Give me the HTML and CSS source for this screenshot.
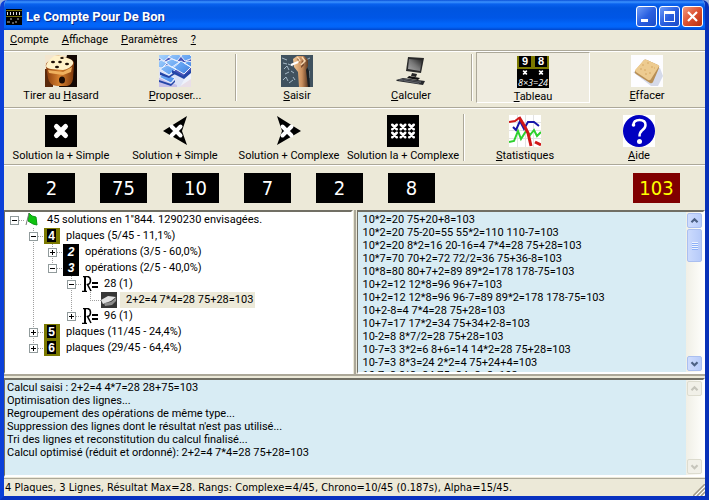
FILE: index.html
```html
<!DOCTYPE html>
<html lang="fr">
<head>
<meta charset="utf-8">
<title>Le Compte Pour De Bon</title>
<link rel="stylesheet" href="styles.css">
</head>
<body>
<svg width="0" height="0" class="defs" aria-hidden="true">
  <defs>
    <path id="cross" d="M-4.500-4.500L4.500 4.500M4.500-4.500L-4.500 4.500" fill="none" stroke="#fff" stroke-linecap="round"/>
    <g id="result"><path d="M1 .5h4.500Q8.500 1 8.500 4.500T5.500 8.500L9 15M0 15.500h5" fill="none" stroke="#000" stroke-width="1.500"/><path d="M2 1h2v14H2z"/><path d="M10 6h6v2h-6zM10 10h6v2h-6z"/></g>
    <linearGradient id="dice" x1="0" y1="0" x2="1" y2="0"><stop offset="0" stop-color="#8b3c0c"/><stop offset=".5" stop-color="#d98430"/><stop offset="1" stop-color="#7a3408"/></linearGradient>
    <linearGradient id="key" x1="0" y1="0" x2="1" y2="1"><stop offset="0" stop-color="#b4dcff"/><stop offset=".6" stop-color="#5b9cf0"/><stop offset="1" stop-color="#2e62c8"/></linearGradient>
    <linearGradient id="screen" x1="1" y1="0" x2="0" y2="1"><stop offset="0" stop-color="#222"/><stop offset=".5" stop-color="#777"/><stop offset="1" stop-color="#aaa"/></linearGradient>
    <linearGradient id="arm" x1="0" y1="0" x2="1" y2="0"><stop offset="0" stop-color="#f0c898"/><stop offset=".6" stop-color="#c98e5c"/><stop offset="1" stop-color="#5e3a22"/></linearGradient>
  </defs>
</svg>
<div class="window">
  <header class="titlebar">
    <svg class="app-icon" viewBox="0 0 16 16"><path fill="#000" d="M0 0h16v16H0z"/><path d="M0 1.500h16M0 7.500h16" stroke="#77700a"/><path d="M1.500 3v3M4.500 3v3M7.500 3v3M10.500 3v3M13.500 3v3" stroke="#ddd" fill="none"/><path d="M4 10h2M11 10h2M1 13h3M6 14h2M10 12v2" stroke="#bbb"/></svg>
    <h1>Le Compte Pour De Bon</h1>
    <button class="caption" aria-label="Réduire"><svg viewBox="0 0 19 19"><path fill="#fff" d="M4 12h7v3H4z"/></svg></button>
    <button class="caption" aria-label="Agrandir"><svg viewBox="0 0 19 19"><path fill="#fff" fill-rule="evenodd" d="M4 4h11v11H4zM5 7v7h9V7z"/></svg></button>
    <button class="caption close" aria-label="Fermer"><svg viewBox="0 0 19 19"><path d="M5 5l9 9M14 5l-9 9" stroke="#fff" stroke-width="2.200"/></svg></button>
  </header>
  <nav class="menu">
    <button><u>C</u>ompte</button>
    <button><u>A</u>ffichage</button>
    <button><u>P</u>aramètres</button>
    <button><u>?</u></button>
  </nav>
  <div class="toolbar">
    <button class="tool">
      <svg viewBox="0 0 32 32"><path fill="#f3e6cf" d="M0 0h32v14H0z"/><path fill="#140803" d="M22 0h10v32H14z"/><path fill="#5b2a0c" d="M0 14h8v18H0z"/><path d="M1 12Q0 8 4 6L10 1q3-1 6 0l9 3q5 2 4 6l-1 14q-1 6-6 7H12q-8-1-9-8z" fill="url(#dice)"/><path d="M1 11Q2 6 9 1q3-1 7 0l9 3q4 2 3 5-3 5-10 6L6 14Q1 13 1 11z" fill="#fff1c8"/><path d="M3 15l15 2 9-5-1 5-8 3-14-2z" fill="#efb15e"/><g fill="#1c0c03"><ellipse cx="8" cy="7" rx="2" ry="1.200"/><ellipse cx="17" cy="3" rx="1.800" ry="1"/><ellipse cx="15" cy="7" rx="1.800" ry="1.200"/><ellipse cx="12" cy="12" rx="2" ry="1.200"/><ellipse cx="22" cy="9" rx="2" ry="1.300"/><ellipse cx="17" cy="25" rx="3" ry="3.500"/></g></svg>
      <span>Tirer au <u>H</u>asard</span>
    </button>
    <button class="tool">
      <svg viewBox="0 0 32 32"><path fill="#eef2fb" d="M0 0h32v32H0z"/><path fill="#4a55b8" d="M0 0h32v16l-6 6L0 13z"/><path d="M0 13l26 10-5 9H0z" fill="#dde3f6"/><path d="M0 22l18 8v2H0z" fill="#c6c0e8"/><g fill="url(#key)" stroke="#eaf2ff"><path d="M-3 1l8-4 7 3-7 6zM9 2l7-4 7 2-5 6zM20-1h10l4 4-8 3zM-3 8l5-3 6 3-5 5-6-1zM6 7l7-3 8 3-7 6zM25 8l4-2 4 1v6zM13 12l9-6 10 6-7 7zM1 14l7-4 9 4-7 6zM0 22l5-3 11 4-4 5z"/></g><path d="M13 15l11 6 8-6v3l-7 6-12-6zM1 17l9 4 6-4v2l-6 4-9-3zM0 25l12 4 4-4v2l-4 4-12-4z" fill="#2346a8"/><path d="M20 32l12-8v8z" fill="#e9dfe8"/></svg>
      <span><u>P</u>roposer...</span>
    </button>
    <i class="separator"></i>
    <button class="tool">
      <svg viewBox="0 0 32 32"><path fill="#40525f" d="M0 0h32v32H0z"/><path d="M1 3l5 2M3 14l3-3 2 4M7 9l5 2M4 19l4-2M10 16l3 2M2 25l3-3 2 4M8 28l4-3M12 22l2 3M2 8l4 1M25 5l4-2M28 16v7" stroke="#a6b9c6" fill="none"/><path fill="#1b2025" d="M25 10l3 6 1 16h-5z"/><path d="M12 4l4-3h7l4 4v6l-2 4 2 17H18l-1-15-4-5z" fill="url(#arm)"/><path d="M16 3l4 1-2 4zM21 5l2 5-3 3z" fill="#6a3c24"/><path d="M16 2l3 3-3 3M21 2l3 4-4 4" stroke="#f8d8b0" fill="none" stroke-width="1.500"/><path d="M10 10l7-3" stroke="#fff" stroke-width="2"/></svg>
      <span><u>S</u>aisir</span>
    </button>
    <button class="tool">
      <svg viewBox="0 0 32 32"><path d="M13 2l16 1-3 15-15-2z" fill="#292929"/><path d="M14 4l13 1-2 11-12-2z" fill="url(#screen)"/><path d="M17 18l5 1-1 3-5-1z" fill="#252525"/><path d="M14 21l11 2-2 2-11-2z" fill="#111"/><path d="M1 25l7-2 22 3-2 4-26-4z" fill="#26282c"/><path d="M4 25l5-1 17 3-2 1zM9 25.500l15 3" stroke="#696c72" stroke-width=".7" fill="none"/></svg>
      <span><u>C</u>alculer</span>
    </button>
    <i class="separator"></i>
    <button class="tool pressed" aria-pressed="true">
      <svg viewBox="0 0 32 32"><path fill="#000" d="M0 0h32v32H0z"/><path fill="#7b7900" d="M0 0h32v13H0z"/><path fill="#000" d="M2 0h12v11H2zM18 0h12v11H18z"/><g fill="#fff" font-family="Liberation Sans" font-weight="bold" text-anchor="middle"><text x="8" y="9" font-size="11">9</text><text x="24" y="9" font-size="11">8</text></g><use href="#cross" transform="translate(8 16.500) scale(.3)" stroke-width="6"/><use href="#cross" transform="translate(24 16.500) scale(.3)" stroke-width="6"/><text x="16" y="30" font-size="9" fill="#fff" font-family="Open Sans" font-style="italic" text-anchor="middle">8×3=24</text></svg>
      <span><u>T</u>ableau</span>
    </button>
    <button class="tool">
      <svg viewBox="0 0 32 32"><path fill="#fdfdff" d="M0 0h32v32H0z"/><path d="M2 17l18 14h7l5-10-3-8z" fill="#d5dae9"/><path d="M4 16L13 5q1-1 3 0l11 5q2 1 1 3l-6 14q-1 2-3 1L5 19q-2-1-1-3z" fill="#b88f55"/><path d="M4 15L13 5q1-1 3 0l11 5q2 1 0 3l-7 11q-1 2-3 1L5 17q-1-1-1-2z" fill="#edcb90"/><path d="M11 10h2M16 8h2M20 12h2M13 15h2M18 18h2M9 14h2M23 13h1M14 19h2" stroke="#d6a865"/></svg>
      <span><u>E</u>ffacer</span>
    </button>
  </div>
  <div class="toolbar solutions">
    <button class="tool">
      <svg viewBox="0 0 32 32"><path fill="#000" d="M0 0h32v32H0z"/><use href="#cross" transform="translate(16 16)" stroke-width="5"/></svg>
      <span>Solution la + Simple</span>
    </button>
    <button class="tool">
      <svg viewBox="0 0 32 32"><path fill="#000" d="M4 16L28 1l-5 15 5 14z"/><use href="#cross" transform="translate(17 16)" stroke-width="4"/></svg>
      <span>Solution + Simple</span>
    </button>
    <button class="tool">
      <svg viewBox="0 0 32 32"><path fill="#000" d="M28 16L4 1l5 15-5 14z"/><use href="#cross" transform="translate(14 16)" stroke-width="4"/></svg>
      <span>Solution + Complexe</span>
    </button>
    <button class="tool">
      <svg viewBox="0 0 32 32"><path fill="#000" d="M0 0h32v32H0z"/><g stroke-width="5"><use href="#cross" transform="translate(7.500 12) scale(.5)"/><use href="#cross" transform="translate(16 12) scale(.5)"/><use href="#cross" transform="translate(24.500 12) scale(.5)"/><use href="#cross" transform="translate(7.500 20) scale(.5)"/><use href="#cross" transform="translate(16 20) scale(.5)"/><use href="#cross" transform="translate(24.500 20) scale(.5)"/></g></svg>
      <span>Solution la + Complexe</span>
    </button>
    <i class="separator"></i>
    <button class="tool">
      <svg viewBox="0 0 32 32"><path fill="#fff" d="M0 0h32v32H0z"/><path d="M0 7.500h32M0 15.500h32M0 23.500h32M8.500 0v32M16.500 0v32M24.500 0v32" stroke="#e3e3e3" fill="none"/><path d="M0 27l5-1 4-10 3 8 5-8 4 4 4-5 3 6 4-4" fill="none" stroke="#2ed02e" stroke-width="2"/><path d="M4 12l3 3 4-9 4 8 4-7 6 0 5 4" fill="none" stroke="#1616a8" stroke-width="2"/><path d="M0 7l6-1 4-3" fill="none" stroke="#d01818" stroke-width="2"/><path d="M10 2l6 10 3 6 3 13" fill="none" stroke="#d01818" stroke-width="3"/><path d="M26 27l6 3" stroke="#d01818" stroke-width="3"/></svg>
      <span><u>S</u>tatistiques</span>
    </button>
    <button class="tool">
      <svg viewBox="0 0 32 32"><path fill="#fff" d="M0 0h32v32H0z"/><circle cx="16" cy="16" r="16" fill="#0000c0"/><path d="M10.500 10q0-5 6-5t6 5q0 3-3.500 5.500-2.500 2-2.500 6" fill="none" stroke="#fff" stroke-width="2.500"/><circle cx="10.500" cy="10" r="1.800" fill="#fff"/><circle cx="16.500" cy="26.500" r="2.500" fill="#fff"/></svg>
      <span><u>A</u>ide</span>
    </button>
  </div>
  <div class="plates">
    <span class="plate">2</span><span class="plate">75</span><span class="plate">10</span><span class="plate">7</span><span class="plate">2</span><span class="plate">8</span>
    <span class="plate target">103</span>
  </div>
  <main class="panes">
    <section class="pane tree">
      <ul>
        <li>
          <div class="row"><button class="toggle" aria-label="Replier"></button><i class="dots"></i><svg viewBox="0 0 16 16"><path d="M4 1l3 3 4 1 1 8-4-1-5-3z" fill="#10c410" stroke="#0a9a14"/><path d="M4 1L1 13" stroke="#777"/></svg><span>45 solutions en 1''844. 1290230 envisagées.</span></div>
          <ul>
            <li>
              <div class="row"><button class="toggle" aria-label="Replier"></button><i class="dots"></i><svg viewBox="0 0 16 16"><path fill="#7b7900" d="M0 0h16v16H0z"/><path fill="#000" d="M3 1h9v13H3z"/><text class="digit" x="7.500" y="12">4</text></svg><span>plaques (5/45 - 11,1%)</span></div>
              <ul>
                <li><div class="row"><button class="toggle closed" aria-label="Déplier"></button><i class="dots"></i><svg viewBox="0 0 16 16"><path fill="#000" d="M0 0h16v16H0z"/><text class="digit thin" x="8" y="12">2</text></svg><span>opérations (3/5 - 60,0%)</span></div></li>
                <li>
                  <div class="row"><button class="toggle" aria-label="Replier"></button><i class="dots"></i><svg viewBox="0 0 16 16"><path fill="#000" d="M0 0h16v16H0z"/><text class="digit thin" x="8" y="12">3</text></svg><span>opérations (2/5 - 40,0%)</span></div>
                  <ul>
                    <li>
                      <div class="row"><button class="toggle" aria-label="Replier"></button><i class="dots"></i><svg viewBox="0 0 16 16"><use href="#result"/></svg><span>28 (1)</span></div>
                      <ul>
                        <li><div class="row"><i class="dots leaf"></i><svg viewBox="0 0 16 16"><path fill="#373737" d="M0 0h16v16H0z"/><path d="M0 8l7-4 8 1-5 4-8 3z" fill="#e2e2e2"/><path d="M3 11l7-1 5-4v3l-4 4-7 1z" fill="#8d8d8d"/></svg><span class="selected">2+2=4 7*4=28 75+28=103</span></div></li>
                      </ul>
                    </li>
                    <li><div class="row"><button class="toggle closed" aria-label="Déplier"></button><i class="dots"></i><svg viewBox="0 0 16 16"><use href="#result"/></svg><span>96 (1)</span></div></li>
                  </ul>
                </li>
              </ul>
            </li>
            <li><div class="row"><button class="toggle closed" aria-label="Déplier"></button><i class="dots"></i><svg viewBox="0 0 16 16"><path fill="#7b7900" d="M0 0h16v16H0z"/><path fill="#000" d="M3 1h9v13H3z"/><text class="digit" x="7.500" y="12">5</text></svg><span>plaques (11/45 - 24,4%)</span></div></li>
            <li><div class="row"><button class="toggle closed" aria-label="Déplier"></button><i class="dots"></i><svg viewBox="0 0 16 16"><path fill="#7b7900" d="M0 0h16v16H0z"/><path fill="#000" d="M3 1h9v13H3z"/><text class="digit" x="7.500" y="12">6</text></svg><span>plaques (29/45 - 64,4%)</span></div></li>
          </ul>
        </li>
      </ul>
    </section>
    <section class="pane results">
      <ul>
        <li>10*2=20 75+20+8=103</li>
        <li>10*2=20 75-20=55 55*2=110 110-7=103</li>
        <li>10*2=20 8*2=16 20-16=4 7*4=28 75+28=103</li>
        <li>10*7=70 70+2=72 72/2=36 75+36-8=103</li>
        <li>10*8=80 80+7+2=89 89*2=178 178-75=103</li>
        <li>10+2=12 12*8=96 96+7=103</li>
        <li>10+2=12 12*8=96 96-7=89 89*2=178 178-75=103</li>
        <li>10+2-8=4 7*4=28 75+28=103</li>
        <li>10+7=17 17*2=34 75+34+2-8=103</li>
        <li>10-2=8 8*7/2=28 75+28=103</li>
        <li>10-7=3 3*2=6 8+6=14 14*2=28 75+28=103</li>
        <li>10-7=3 8*3=24 2*2=4 75+24+4=103</li>
        <li>10-7=3 8*3=24 75+24+2+2=103</li>
      </ul>
      <div class="scrollbar">
        <button aria-label="Haut"><svg viewBox="0 0 15 15"><path d="M4 9.500L7.500 6 11 9.500"/></svg></button>
        <div class="thumb"></div>
        <button class="down" aria-label="Bas"><svg viewBox="0 0 15 15"><path d="M4 6l3.500 3.500L11 6"/></svg></button>
      </div>
    </section>
  </main>
  <section class="pane log">
    <textarea readonly aria-label="Journal">Calcul saisi : 2+2=4 4*7=28 28+75=103
Optimisation des lignes...
Regroupement des opérations de même type...
Suppression des lignes dont le résultat n'est pas utilisé...
Tri des lignes et reconstitution du calcul finalisé...
Calcul optimisé (réduit et ordonné): 2+2=4 7*4=28 75+28=103</textarea>
    <div class="scrollbar disabled">
      <button disabled aria-label="Haut"><svg viewBox="0 0 15 15"><path d="M4 9.500L7.500 6 11 9.500"/></svg></button>
      <button disabled class="down" aria-label="Bas"><svg viewBox="0 0 15 15"><path d="M4 6l3.500 3.500L11 6"/></svg></button>
    </div>
  </section>
  <footer class="status">
    <span>4 Plaques, 3 Lignes, Résultat Max=28. Rangs: Complexe=4/45, Chrono=10/45 (0.187s), Alpha=15/45.</span>
    <svg viewBox="0 0 12 12"><path d="M0 12L12 0M4 12l8-8M8 12l4-4" stroke="#a09a88" stroke-width="1.500"/><path d="M2 12L12 2M6 12l6-6M10 12l2-2" stroke="#fff"/></svg>
  </footer>
</div>
</body>
</html>
```
FILE: styles.css
```css
* { box-sizing: border-box; }

body {
  margin: 0;
  background: #9fb4dc;
  font: 11px/13px Roboto, "Liberation Sans", Arial, sans-serif;
  color: #000;
}

button {
  margin: 0;
  padding: 0;
  border: 0;
  background: none;
  font: inherit;
  color: inherit;
}

ul { margin: 0; padding: 0; list-style: none; }
svg { display: block; flex: none; }
.defs { position: absolute; }

.window {
  display: flex;
  flex-direction: column;
  height: 100vh;
  border: 4px solid;
  border-color: transparent #0831b8 #0831c0 #0a3fd8;
  border-top: 0;
  border-radius: 7px 7px 0 0;
  background: #ece9d8;
  overflow: hidden;
}

.titlebar {
  display: flex;
  align-items: center;
  flex: none;
  gap: 2px;
  height: 30px;
  margin: 0 -4px;
  padding: 3px 6px 0;
  background: linear-gradient(#0a50d8 0, #3c93ff 2px, #0a62ee 4px, #0055e0 8px, #0056e6 18px, #0266fb 24px, #0264f8 27px, #0046cc 30px);
}
.titlebar h1 {
  flex: 1;
  margin: 0 0 0 2px;
  font: bold 13px/18px Roboto, sans-serif;
  color: #fff;
  text-shadow: 1px 1px #0a2a8a;
}
.app-icon { width: 16px; height: 16px; }
.caption {
  width: 21px;
  height: 21px;
  border: 1px solid #fff;
  border-radius: 3px;
  background: linear-gradient(135deg, #6f9cf8, #2a5fe0 50%, #1b4cc8);
}
.caption.close { background: linear-gradient(135deg, #f09a80, #dc5030 50%, #b83010); }

.menu {
  display: flex;
  flex: none;
  gap: 13px;
  height: 22px;
  padding: 1px 6px 3px;
  border-bottom: 1px solid #fff;
  box-shadow: inset 0 -1px #aca899;
}

.toolbar {
  display: flex;
  flex: none;
  height: 57px;
  padding-bottom: 5px;
  border-bottom: 1px solid #fff;
  box-shadow: inset 0 -1px #aca899;
}
.toolbar.solutions { padding: 3px 0 2px; }
.tool {
  display: flex;
  flex: 0 1 114px;
  flex-direction: column;
  align-items: center;
  gap: 2px;
  padding-top: 3px;
  white-space: nowrap;
}
.tool svg { width: 32px; height: 32px; }
.tool.pressed {
  border: 1px solid;
  border-color: #aca899 #fff #fff #aca899;
  background: #efece0;
}
.separator {
  flex: none;
  width: 2px;
  margin: 2px 3px;
  border-left: 1px solid #aca899;
  border-right: 1px solid #fff;
}

.plates {
  display: flex;
  flex: none;
  gap: 25px;
  padding: 7px 25px 7px 24px;
}
.plate {
  width: 47px;
  height: 30px;
  background: #000;
  font: 20px/30px "DejaVu Sans Condensed", "DejaVu Sans", sans-serif;
  color: #fff;
  text-align: center;
}
.plate.target { margin-left: auto; background: #800000; color: #ff0; }

.panes {
  display: grid;
  flex: 1;
  grid-template-columns: 1fr 1fr;
  gap: 4px;
  min-height: 0;
  border-bottom: 2px solid #aca899;
  background: linear-gradient(#aca899, #aca899) center / 2px 100% no-repeat;
}
.pane {
  display: flex;
  min-width: 0;
  border: 2px solid;
  border-color: #716f64 #fff #fff #716f64;
  border-left-width: 1px;
  background: #d8ecf4;
  overflow: hidden;
}

.tree { padding: 0 0 0 5px; background: #fff; }
.tree ul ul { padding-left: 19px; }
.tree li li {
  background: repeating-linear-gradient(#a0a0a0 0 1px, transparent 1px 2px) 4px 0 / 1px 100% no-repeat;
}
.tree li li:last-child { background-size: 1px 8px; }
.row {
  display: flex;
  align-items: center;
  height: 16px;
  white-space: nowrap;
}
.row svg { width: 16px; height: 16px; }
.row span { padding: 0 2px 0 3px; margin-left: 3px; line-height: 16px; }
.row .selected { padding-left: 6px; background: #ece9d8; }
.toggle {
  flex: none;
  width: 9px;
  height: 9px;
  border: 1px solid #919b9c;
  background: linear-gradient(#000, #000) center / 5px 1px no-repeat, #fff;
}
.toggle.closed {
  background: linear-gradient(#000, #000) center / 5px 1px no-repeat, linear-gradient(#000, #000) center / 1px 5px no-repeat, #fff;
}
.dots {
  flex: none;
  width: 6px;
  height: 1px;
  background: repeating-linear-gradient(90deg, #a0a0a0 0 1px, transparent 1px 2px);
}
.dots.leaf { width: 11px; margin-left: 4px; }
.digit {
  fill: #fff;
  font: bold 12px "Liberation Sans", sans-serif;
  text-anchor: middle;
}
.digit.thin { font-style: italic; }

.results ul {
  flex: 1;
  min-width: 0;
  padding: 1px 0 0 5px;
  white-space: nowrap;
  overflow: hidden;
}

.scrollbar {
  display: flex;
  flex: none;
  flex-direction: column;
  gap: 1px;
  width: 17px;
  padding: 1px;
  background: linear-gradient(90deg, #f0efe6, #fefefb);
}
.scrollbar button, .thumb {
  flex: none;
  height: 15px;
  border: 1px solid #aabff0;
  border-radius: 2px;
  background: linear-gradient(90deg, #cfdcfd, #b8ccfa);
}
.scrollbar button svg { width: 13px; height: 13px; }
.scrollbar path { fill: none; stroke: #4d6185; stroke-width: 2.5; }
.scrollbar .thumb {
  height: 33px;
  background:
    repeating-linear-gradient(#eef4fe 0 1px, #8cb0f8 1px 2px) center / 6px 8px no-repeat,
    linear-gradient(90deg, #cbdafd, #b6caf9);
}
.scrollbar .down { margin-top: auto; }
.scrollbar.disabled button { border-color: #dddccf; background: #f1f0e8; }
.scrollbar.disabled path { stroke: #c6c5bb; }

.log { flex: none; height: 99px; margin-top: 2px; }
.log textarea {
  flex: 1;
  min-width: 0;
  padding: 1px 2px;
  border: 0;
  outline: 0;
  background: none;
  font: inherit;
  color: inherit;
  resize: none;
  overflow: hidden;
}

.status {
  display: flex;
  flex: none;
  justify-content: space-between;
  align-items: flex-end;
  height: 18px;
  margin-top: 1px;
  border-top: 1px solid #aca899;
  font: 11px/16px "DejaVu Sans Condensed", "DejaVu Sans", sans-serif;
  white-space: nowrap;
}
.status span { padding-left: 1px; }
.status svg { width: 12px; height: 12px; }
```
